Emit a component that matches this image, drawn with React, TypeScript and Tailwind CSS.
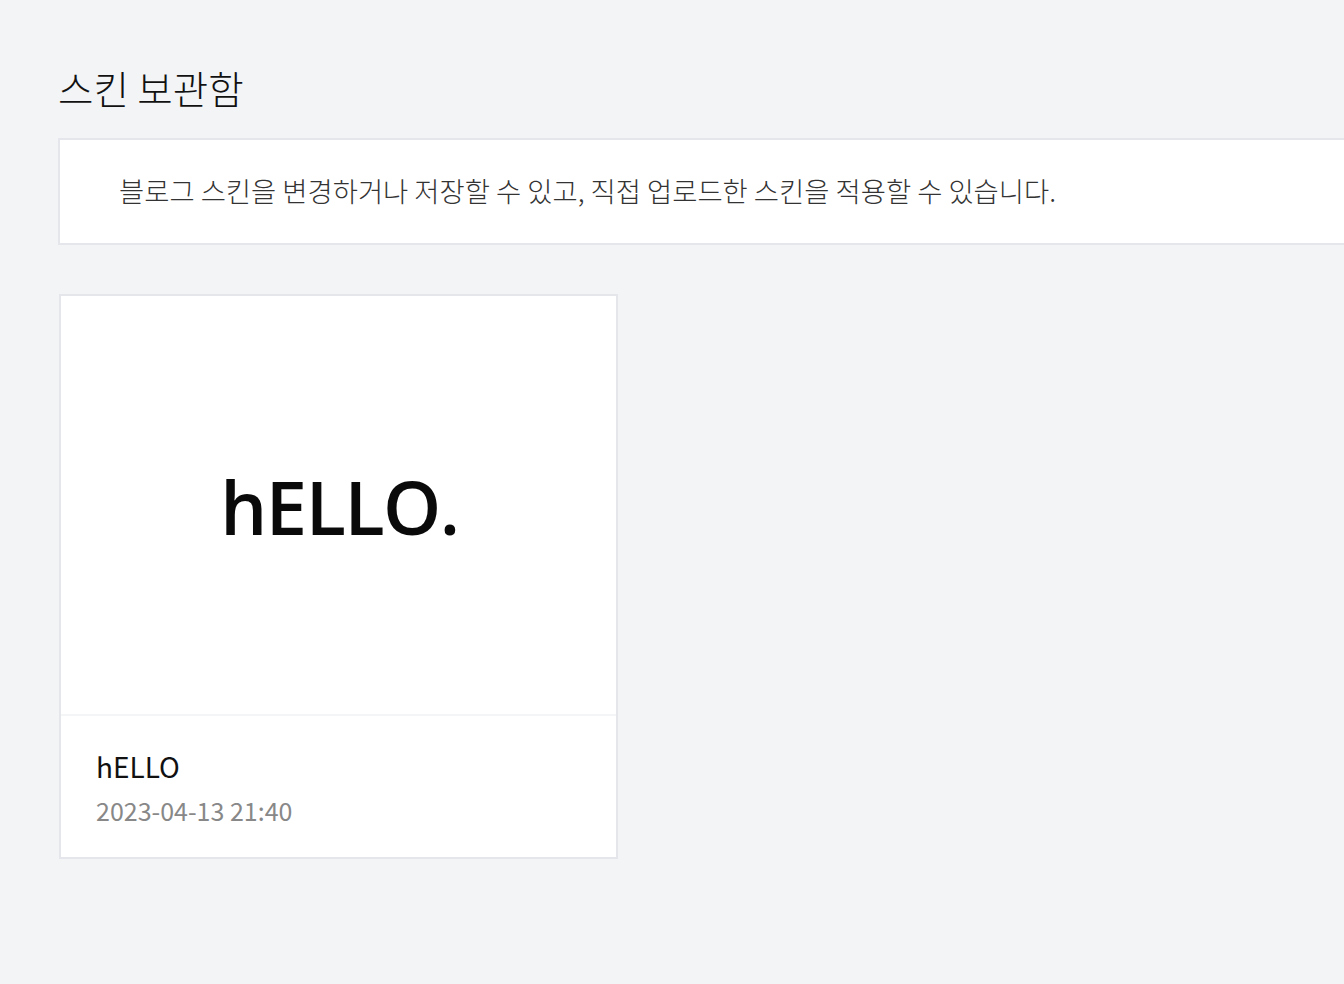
const kr = "font-['Noto_Sans_CJK_KR','Noto_Sans',sans-serif]";

function SkinCard({ name, date }: { name: string; date: string }) {
  return (
    <div className="w-[559px] border-2 border-[#e4e6eb] bg-white">
      <div className="flex h-[418px] items-center justify-center">
        <span className="pl-[2px] pt-[4px] font-['Open_Sans',sans-serif] text-[74px] font-semibold leading-none tracking-[-1.5px] text-[#0a0a0a]">
          hELLO.
        </span>
      </div>
      <div className="border-t-2 border-[#f4f5f7] px-[35px] pt-[30px] pb-[29px]">
        <div className={`${kr} text-[28px] leading-[40px] text-[#111]`}>{name}</div>
        <div className={`${kr} mt-[6px] text-[25px] leading-[36px] text-[#888]`}>{date}</div>
      </div>
    </div>
  );
}

export default function App() {
  return (
    <div className={`min-h-screen bg-[#f3f4f6] pl-[58px] pt-[62px] ${kr}`}>
      <h1 className="text-[38.5px] font-light leading-[50px] text-[#111]">스킨 보관함</h1>
      <div className="mt-[26px] flex h-[107px] items-center border-2 border-r-0 border-[#e4e6eb] bg-white pl-[59px]">
        <p className="-mt-[3px] text-[27.4px] font-light leading-[36px] text-[#333]">
          블로그 스킨을 변경하거나 저장할 수 있고, 직접 업로드한 스킨을 적용할 수 있습니다.
        </p>
      </div>
      <div className="mt-[49px] pl-[1px]">
        <SkinCard name="hELLO" date="2023-04-13 21:40" />
      </div>
    </div>
  );
}
